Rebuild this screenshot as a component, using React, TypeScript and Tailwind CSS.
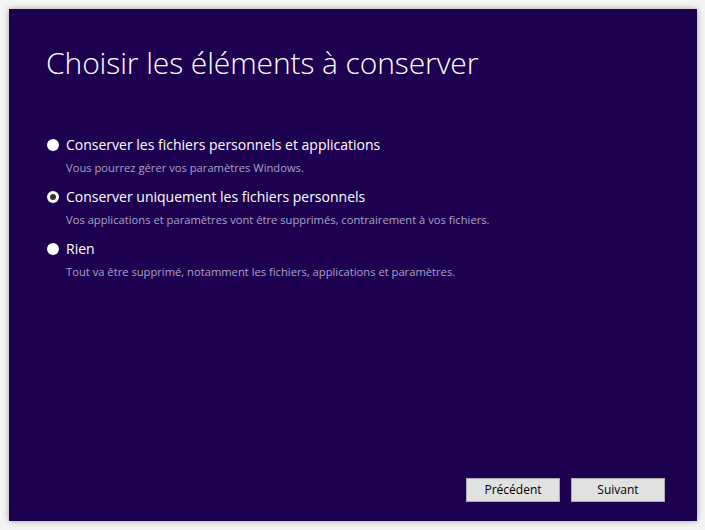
const options = [
  {
    label: "Conserver les fichiers personnels et applications",
    desc: "Vous pourrez gérer vos paramètres Windows.",
    selected: false,
  },
  {
    label: "Conserver uniquement les fichiers personnels",
    desc: "Vos applications et paramètres vont être supprimés, contrairement à vos fichiers.",
    selected: true,
  },
  {
    label: "Rien",
    desc: "Tout va être supprimé, notamment les fichiers, applications et paramètres.",
    selected: false,
  },
];

function Radio({ selected }: { selected: boolean }) {
  if (selected) {
    return (
      <span className="w-3 h-3 rounded-full bg-white flex items-center justify-center shrink-0">
        <span className="w-[6px] h-[6px] rounded-full bg-[#333333]" />
      </span>
    );
  }
  return <span className="w-3 h-3 rounded-full bg-white shrink-0" />;
}

export default function App() {
  return (
    <div
      className="w-[705px] h-[530px] bg-[#f4f4f4] pt-[9px] pl-[9px]"
      style={{ fontFamily: '"Open Sans", "Noto Sans", sans-serif' }}
    >
      <div className="w-[688px] h-[512px] bg-[#1d0150] shadow-[0_0_6px_rgba(0,0,0,0.35)] flex flex-col text-white">
        <h1 className="pl-[37px] pt-[34px] text-[30px] font-light leading-[40px] tracking-[-0.1px]">
          Choisir les éléments à conserver
        </h1>

        <div className="mt-[50px] pl-[38px] flex flex-col gap-[10px]">
          {options.map((o) => (
            <div key={o.label} className="flex flex-col">
              <div className="flex items-center gap-[7px] h-[24px]">
                <Radio selected={o.selected} />
                <span className="text-[14px] leading-[24px]">{o.label}</span>
              </div>
              <div className="mt-[4px] pl-[19px] text-[11.2px] leading-[14px] text-[#a9a3c6]">
                {o.desc}
              </div>
            </div>
          ))}
        </div>

        <div className="mt-auto mb-[19px] pr-[32px] flex justify-end gap-[11px]">
          <button className="w-[94px] h-[24px] bg-[#e1e1e1] border border-[#adadad] text-black text-[12px]">
            Précédent
          </button>
          <button className="w-[94px] h-[24px] bg-[#e1e1e1] border border-[#adadad] text-black text-[12px]">
            Suivant
          </button>
        </div>
      </div>
    </div>
  );
}
